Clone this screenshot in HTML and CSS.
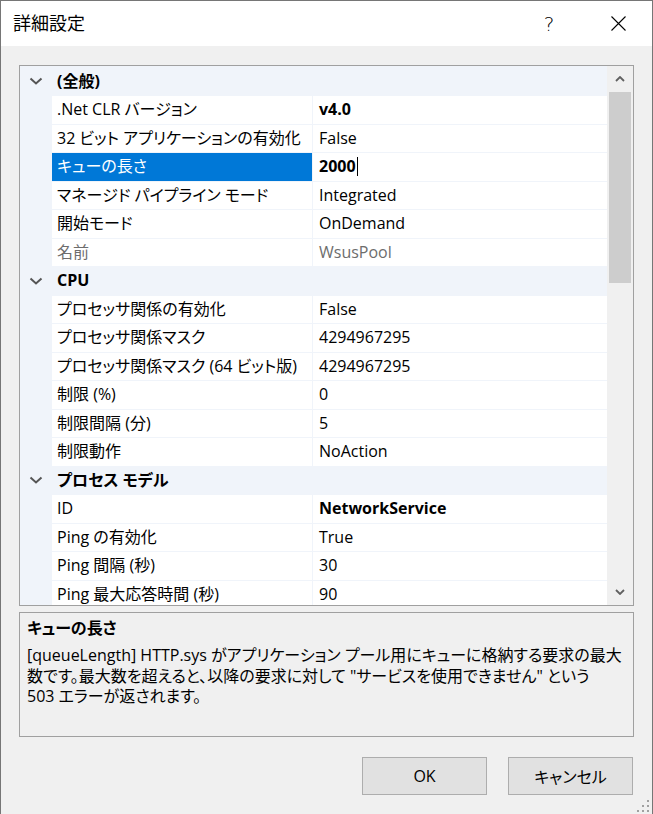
FILE: index.html
```html
<!DOCTYPE html>
<html lang="ja">
<head>
<meta charset="utf-8">
<title>詳細設定</title>
<link rel="stylesheet" href="styles.css">
</head>
<body>
<div class="window">
  <div class="titlebar">
    <span class="title">詳細設定</span>
    <span class="cap help">?</span>
    <span class="cap close">
      <svg width="15" height="15" viewBox="0 0 15 15"><path d="M0.5 0.5 L14.5 14.5 M14.5 0.5 L0.5 14.5" stroke="#000" stroke-width="1.1" fill="none"/></svg>
    </span>
  </div>
  <div class="content">
    <div class="grid">
      <div class="list">
        <div class="cat"><span class="gut"><svg width="14" height="8" viewBox="0 0 14 8"><polyline points="1.5,1.5 7,6.5 12.5,1.5" fill="none" stroke="#555" stroke-width="2"/></svg></span><span class="cat-name">(全般)</span></div>
        <div class="row"><span class="gut"></span><span class="name">.Net CLR バージョン</span><span class="val b">v4.0</span></div>
        <div class="row"><span class="gut"></span><span class="name">32 ビット アプリケーションの有効化</span><span class="val">False</span></div>
        <div class="row"><span class="gut"></span><span class="name sel">キューの長さ</span><span class="val b">2000<span class="caret"></span></span></div>
        <div class="row"><span class="gut"></span><span class="name">マネージド パイプライン モード</span><span class="val">Integrated</span></div>
        <div class="row"><span class="gut"></span><span class="name">開始モード</span><span class="val">OnDemand</span></div>
        <div class="row dis"><span class="gut"></span><span class="name">名前</span><span class="val">WsusPool</span></div>
        <div class="cat"><span class="gut"><svg width="14" height="8" viewBox="0 0 14 8"><polyline points="1.5,1.5 7,6.5 12.5,1.5" fill="none" stroke="#555" stroke-width="2"/></svg></span><span class="cat-name">CPU</span></div>
        <div class="row"><span class="gut"></span><span class="name">プロセッサ関係の有効化</span><span class="val">False</span></div>
        <div class="row"><span class="gut"></span><span class="name">プロセッサ関係マスク</span><span class="val">4294967295</span></div>
        <div class="row"><span class="gut"></span><span class="name">プロセッサ関係マスク (64 ビット版)</span><span class="val">4294967295</span></div>
        <div class="row"><span class="gut"></span><span class="name">制限 (%)</span><span class="val">0</span></div>
        <div class="row"><span class="gut"></span><span class="name">制限間隔 (分)</span><span class="val">5</span></div>
        <div class="row"><span class="gut"></span><span class="name">制限動作</span><span class="val">NoAction</span></div>
        <div class="cat"><span class="gut"><svg width="14" height="8" viewBox="0 0 14 8"><polyline points="1.5,1.5 7,6.5 12.5,1.5" fill="none" stroke="#555" stroke-width="2"/></svg></span><span class="cat-name">プロセス モデル</span></div>
        <div class="row"><span class="gut"></span><span class="name">ID</span><span class="val b">NetworkService</span></div>
        <div class="row"><span class="gut"></span><span class="name">Ping の有効化</span><span class="val">True</span></div>
        <div class="row"><span class="gut"></span><span class="name">Ping 間隔 (秒)</span><span class="val">30</span></div>
        <div class="row"><span class="gut"></span><span class="name">Ping 最大応答時間 (秒)</span><span class="val">90</span></div>
      </div>
      <div class="scroll">
        <div class="arrow"><svg width="10" height="6" viewBox="0 0 10 6"><polyline points="1,5 5,1 9,5" fill="none" stroke="#606060" stroke-width="1.8"/></svg></div>
        <div class="track"><div class="thumb"></div></div>
        <div class="arrow"><svg width="10" height="6" viewBox="0 0 10 6"><polyline points="1,1 5,5 9,1" fill="none" stroke="#606060" stroke-width="1.8"/></svg></div>
      </div>
    </div>
    <div class="desc">
      <div class="desc-title">キューの長さ</div>
      <div class="desc-body">[queueLength] HTTP.sys がアプリケーション プール用にキューに格納する要求の最大<br>数です。最大数を超えると、以降の要求に対して "サービスを使用できません" という<br>503 エラーが返されます。</div>
    </div>
    <div class="buttons">
      <button class="btn">OK</button>
      <button class="btn">キャンセル</button>
    </div>
  </div>
  <div class="grip">
    <svg width="14" height="14" viewBox="0 0 14 14" fill="#a0a0a0">
      <rect x="10" y="0" width="2" height="2"/>
      <rect x="5" y="5" width="2" height="2"/><rect x="10" y="5" width="2" height="2"/>
      <rect x="0" y="10" width="2" height="2"/><rect x="5" y="10" width="2" height="2"/><rect x="10" y="10" width="2" height="2"/>
    </svg>
  </div>
</div>
</body>
</html>
```
FILE: styles.css
```css
html, body {
  margin: 0;
  padding: 0;
  background: #f0f0f0;
}

.window {
  width: 653px;
  height: 814px;
  box-sizing: border-box;
  border: 1px solid #767676;
  border-bottom: none;
  background: #f0f0f0;
  display: flex;
  flex-direction: column;
  position: relative;
  overflow: hidden;
  font-family: "Open Sans", "Noto Sans CJK JP", sans-serif;
  font-feature-settings: "palt";
  font-size: 16px;
  color: #000;
}

.titlebar {
  height: 45px;
  flex: none;
  background: #fff;
  display: flex;
  align-items: center;
}

.title {
  flex: 1;
  padding-left: 12px;
  font-size: 18px;
  line-height: 45px;
}

.cap {
  width: 46px;
  height: 45px;
  display: flex;
  align-items: center;
  justify-content: center;
}

.help {
  font-family: "DejaVu Sans", sans-serif;
  font-weight: 200;
  font-size: 20px;
}

.close {
  margin-left: 23px;
  margin-right: 11px;
}

.content {
  flex: 1;
  padding: 19px 18px 0 18px;
  display: flex;
  flex-direction: column;
}

.grid {
  height: 541px;
  box-sizing: border-box;
  border: 1px solid #a0a0a0;
  display: flex;
  background: #fff;
}

.list {
  flex: 1;
  overflow: hidden;
  padding-top: 1.5px;
  background: #f0f4fa;
}

.row, .cat {
  display: flex;
  height: 28.5px;
  background: #f0f4fa;
  line-height: 27.5px;
  white-space: nowrap;
}

.gut {
  width: 32px;
  flex: none;
  height: 27.5px;
  display: flex;
  align-items: center;
  justify-content: center;
}

.gut svg { display: block; }

.cat-name {
  font-weight: bold;
  padding-left: 5px;
}

.name {
  width: 260px;
  flex: none;
  height: 27.5px;
  margin-right: 1px;
  background: #fff;
  padding-left: 5px;
  box-sizing: border-box;
  overflow: hidden;
}

.name.sel {
  background: #0078d7;
  color: #fff;
}

.val {
  flex: 1;
  height: 27.5px;
  background: #fff;
  padding-left: 6px;
  overflow: hidden;
}

.b { font-weight: bold; }

.dis .name, .dis .val { color: #6d6d6d; }

.caret {
  display: inline-block;
  width: 1px;
  height: 19px;
  background: #000;
  vertical-align: -4px;
  margin-left: 1px;
}

.scroll {
  width: 26px;
  flex: none;
  background: #f0f0f0;
  display: flex;
  flex-direction: column;
}

.arrow {
  height: 26px;
  flex: none;
  display: flex;
  align-items: center;
  justify-content: center;
}

.track {
  flex: 1;
}

.thumb {
  height: 191px;
  margin: 0 2px 0 2px;
  background: #cdcdcd;
}

.desc {
  margin-top: 6px;
  height: 125px;
  box-sizing: border-box;
  border: 1px solid #a0a0a0;
  padding: 4px 7px 0 7px;
  white-space: nowrap;
}

.desc-title {
  font-weight: bold;
  line-height: 22px;
}

.desc-body {
  margin-top: 6px;
  line-height: 20.5px;
}

.buttons {
  margin-top: 20px;
  display: flex;
  justify-content: flex-end;
  gap: 21px;
  padding-right: 1px;
}

.btn {
  width: 125px;
  height: 38px;
  box-sizing: border-box;
  background: #e1e1e1;
  border: 1px solid #adadad;
  font-family: "Open Sans", "Noto Sans CJK JP", sans-serif;
  font-feature-settings: "palt";
  font-size: 16px;
  color: #000;
  padding: 0;
}

.grip {
  position: absolute;
  right: 1px;
  bottom: 0px;
  width: 14px;
  height: 14px;
}

.grip svg { display: block; }
```
